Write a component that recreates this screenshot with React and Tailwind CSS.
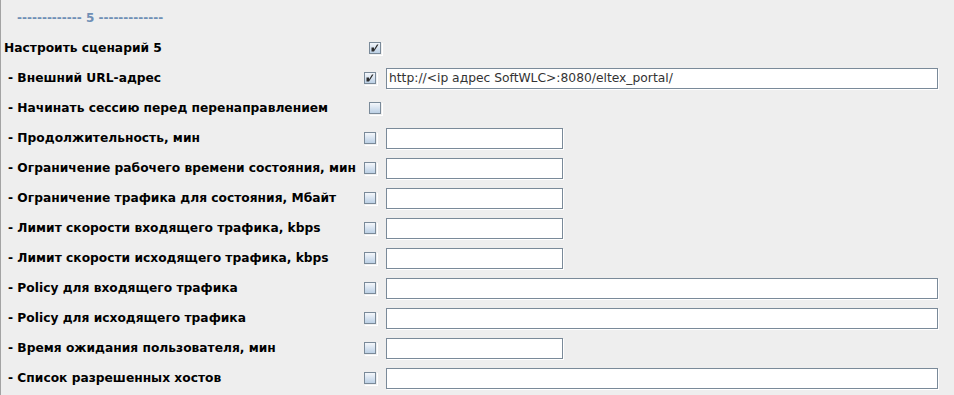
import React from "react";

function Check({ checked }) {
  return (
    <div className="relative w-[13px] h-[13px] shrink-0 shadow-[1px_1px_0_#ffffff]">
      <div className="w-[12px] h-[12px] border border-[#7a8a99] bg-gradient-to-b from-[#f4f7fb] to-[#bcd0e5] flex items-center justify-center">
        {checked && (
          <svg width="10" height="10" viewBox="0 0 10 10" className="block">
            <path d="M1.5 4.5 L1.5 8.5 L4 8.5 L8.5 1.5 L7 1.5 L4 6.5 L4 4.5 Z" fill="#2b2b2b" />
          </svg>
        )}
      </div>
    </div>
  );
}

function Field({ wide, value }) {
  return (
    <div
      className={
        (wide ? "w-[552px]" : "w-[177px]") +
        " h-[21px] bg-white border border-[#7a8a99] shadow-[1px_1px_0_#ffffff] flex items-center pl-[2px] text-[12.3px] text-[#333333] whitespace-nowrap overflow-hidden"
      }
      style={{ fontFamily: '"DejaVu Sans", sans-serif' }}
    >
      {value}
    </div>
  );
}

const rows = [
  { label: "Настроить сценарий 5", checked: true, field: null, top: true },
  { label: "- Внешний URL-адрес", checked: true, field: "wide", value: "http://<ip адрес SoftWLC>:8080/eltex_portal/" },
  { label: "- Начинать сессию перед перенаправлением", checked: false, field: null },
  { label: "- Продолжительность, мин", checked: false, field: "short" },
  { label: "- Ограничение рабочего времени состояния, мин", checked: false, field: "short" },
  { label: "- Ограничение трафика для состояния, Мбайт", checked: false, field: "short" },
  { label: "- Лимит скорости входящего трафика, kbps", checked: false, field: "short" },
  { label: "- Лимит скорости исходящего трафика, kbps", checked: false, field: "short" },
  { label: "- Policy для входящего трафика", checked: false, field: "wide" },
  { label: "- Policy для исходящего трафика", checked: false, field: "wide" },
  { label: "- Время ожидания пользователя, мин", checked: false, field: "short" },
  { label: "- Список разрешенных хостов", checked: false, field: "wide" },
];

export default function App() {
  return (
    <div
      className="w-[954px] h-[395px] bg-[#eeeeee] border-l border-[#a3a3a3] overflow-hidden"
      style={{ fontFamily: '"DejaVu Sans", sans-serif' }}
    >
      <div className="h-[33px] flex items-center pl-[16px] pt-[3px] text-[12px] font-bold text-[#6f8fb5] whitespace-pre">
        ------------- 5 -------------
      </div>
      {rows.map((r, i) => (
        <div key={i} className="h-[30px] flex items-center">
          <div
            className={
              "w-[363px] shrink-0 text-[12.25px] font-bold text-black whitespace-nowrap " +
              (r.top ? "pl-[3px]" : "pl-[7px]")
            }
          >
            {r.label}
          </div>
          <div className={r.field ? "ml-0" : "ml-[5px]"}>
            <Check checked={r.checked} />
          </div>
          {r.field && (
            <div className="ml-[9px]">
              <Field wide={r.field === "wide"} value={r.value} />
            </div>
          )}
        </div>
      ))}
    </div>
  );
}
